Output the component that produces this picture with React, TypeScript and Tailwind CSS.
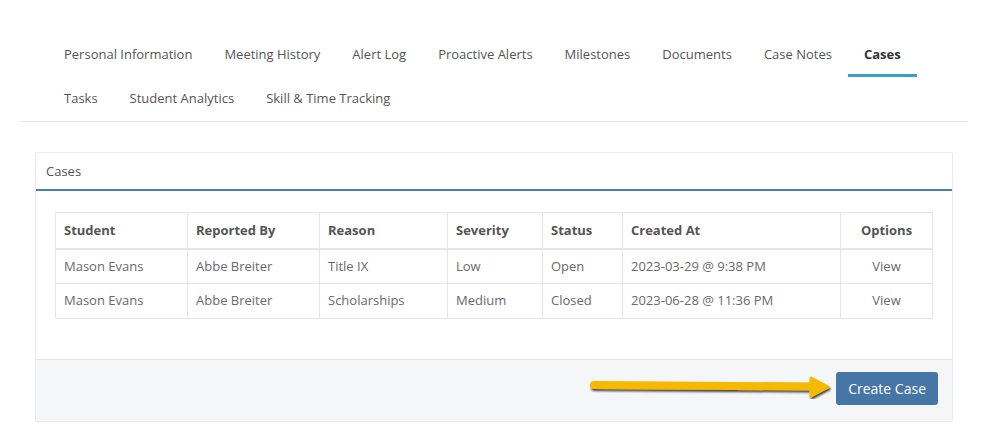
import React from 'react';

const tabsTop = ['Personal Information', 'Meeting History', 'Alert Log', 'Proactive Alerts', 'Milestones', 'Documents', 'Case Notes', 'Cases'];
const tabsBottom = ['Tasks', 'Student Analytics', 'Skill & Time Tracking'];

const columns = [
  { label: 'Student', w: 'w-[132px]' },
  { label: 'Reported By', w: 'w-[132px]' },
  { label: 'Reason', w: 'w-[128px]' },
  { label: 'Severity', w: 'w-[95px]' },
  { label: 'Status', w: 'w-[80px]' },
  { label: 'Created At', w: 'w-[218px]' },
  { label: 'Options', w: '' },
];

const rows = [
  ['Mason Evans', 'Abbe Breiter', 'Title IX', 'Low', 'Open', '2023-03-29 @ 9:38 PM'],
  ['Mason Evans', 'Abbe Breiter', 'Scholarships', 'Medium', 'Closed', '2023-06-28 @ 11:36 PM'],
];

function Tab({ label, active }: { label: string; active?: boolean }) {
  return (
    <li
      className={
        'h-[44px] pt-[3px] px-[16px] flex items-center border-b-[3px] ' +
        (active ? 'border-[#3f9bc9] font-bold text-[#333]' : 'border-transparent text-[#555]')
      }
    >
      {label}
    </li>
  );
}

// annotation arrow pointing at the button
function Arrow() {
  return (
    <svg className="absolute left-[546px] top-[15px]" width="256" height="24" viewBox="0 0 256 24">
      <defs>
        <filter id="sh" x="-10%" y="-50%" width="120%" height="200%">
          <feDropShadow dx="1" dy="2" stdDeviation="1.2" floodColor="#000" floodOpacity="0.75" />
        </filter>
      </defs>
      <g filter="url(#sh)">
        <path d="M12 10 L234 11.5" stroke="#f7b900" strokeWidth="8" strokeLinecap="round" fill="none" />
        <path d="M229 3 L246 12 L229 21 Z" fill="#f7b900" stroke="#f7b900" strokeWidth="3" strokeLinejoin="round" />
      </g>
    </svg>
  );
}

export default function App() {
  return (
    <div className="w-[991px] h-[442px] bg-white text-[13px] font-['Open_Sans',sans-serif] text-[#555] overflow-hidden">
      <div className="ml-[20px] mr-[23px] pt-[33px]">
        {/* Tabs */}
        <div className="border-b border-[#e6e6e6] pl-[28px]">
          <ul className="flex">
            {tabsTop.map((t) => (
              <Tab key={t} label={t} active={t === 'Cases'} />
            ))}
          </ul>
          <ul className="flex">
            {tabsBottom.map((t) => (
              <Tab key={t} label={t} />
            ))}
          </ul>
        </div>

        {/* Cases card */}
        <div className="mx-[15px] mt-[30px] border border-[#ebebeb] rounded-[2px]">
          <div className="h-[38px] pt-[2px] flex items-center px-[10px] text-[#555] border-b-2 border-[#4a7db3]">Cases</div>
          <div className="px-[19px] pt-[21px] pb-[40px]">
            <table className="w-full border-collapse border border-[#e6e6e6] text-[#6a6a6a]">
              <thead>
                <tr className="h-[36px]">
                  {columns.map((c) => (
                    <th
                      key={c.label}
                      className={
                        c.w +
                        ' border border-[#e6e6e6] border-b-2 font-bold text-[#555] ' +
                        (c.label === 'Options' ? 'text-center' : 'text-left px-[8px]')
                      }
                    >
                      {c.label}
                    </th>
                  ))}
                </tr>
              </thead>
              <tbody>
                {rows.map((r, i) => (
                  <tr key={i} className="h-[35px]">
                    {r.map((cell, j) => (
                      <td key={j} className="border border-[#e6e6e6] px-[8px]">
                        {cell}
                      </td>
                    ))}
                    <td className="border border-[#e6e6e6] text-center">View</td>
                  </tr>
                ))}
              </tbody>
            </table>
          </div>
          <div className="relative h-[62px] bg-[#f5f6f8] border-t border-[#e6e6e6] flex items-start justify-end pt-[12px] pr-[14px]">
            <Arrow />
            <button className="h-[33px] px-[12px] rounded-[3px] bg-[#4676a6] text-white text-[14px]">Create Case</button>
          </div>
        </div>
      </div>
    </div>
  );
}
